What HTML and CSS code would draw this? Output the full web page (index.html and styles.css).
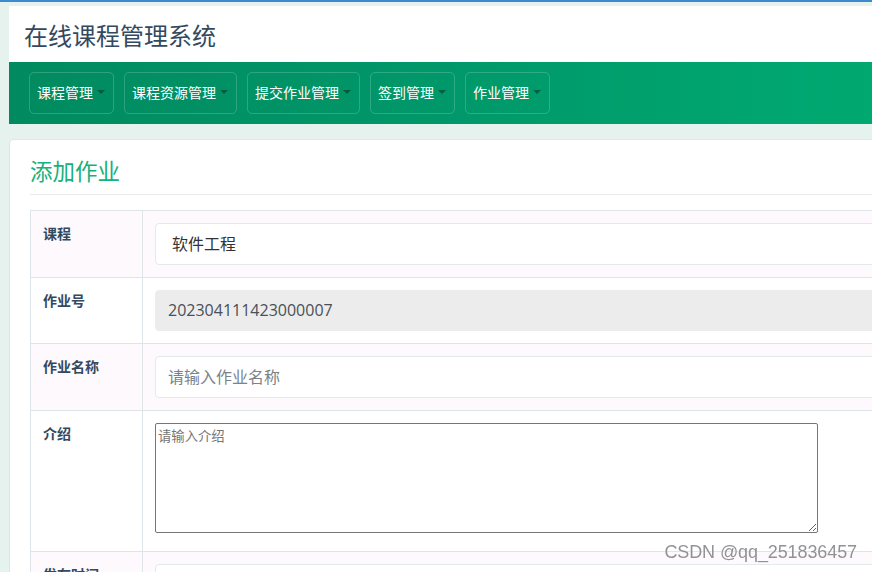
FILE: index.html
```html
<!DOCTYPE html>
<html lang="zh-CN">
<head>
<meta charset="utf-8">
<title>在线课程管理系统</title>
<link rel="stylesheet" href="styles.css">
</head>
<body>
<div class="page">
  <header class="site-header">在线课程管理系统</header>
  <nav class="navbar">
    <a class="nav-btn">课程管理<span class="caret"></span></a>
    <a class="nav-btn">课程资源管理<span class="caret"></span></a>
    <a class="nav-btn">提交作业管理<span class="caret"></span></a>
    <a class="nav-btn">签到管理<span class="caret"></span></a>
    <a class="nav-btn">作业管理<span class="caret"></span></a>
  </nav>
  <main class="card">
    <h2 class="card-title">添加作业</h2>
    <table class="form-table">
      <tr class="odd">
        <th>课程</th>
        <td><select class="form-control select"><option>软件工程</option></select></td>
      </tr>
      <tr>
        <th>作业号</th>
        <td><input class="form-control" type="text" value="202304111423000007" disabled></td>
      </tr>
      <tr class="odd">
        <th>作业名称</th>
        <td><input class="form-control" type="text" placeholder="请输入作业名称"></td>
      </tr>
      <tr>
        <th>介绍</th>
        <td><textarea class="intro" placeholder="请输入介绍"></textarea></td>
      </tr>
      <tr class="odd">
        <th>发布时间</th>
        <td><input class="form-control" type="text"></td>
      </tr>
    </table>
  </main>
</div>
<div class="watermark">CSDN @qq_251836457</div>
</body>
</html>
```

FILE: styles.css
```css
html, body {
  margin: 0;
  padding: 0;
}
body {
  background: #e6f2ee;
  border-top: 2px solid #3c8bcc;
  overflow: hidden;
  font-family: "Open Sans", "Noto Sans CJK SC", sans-serif;
  color: #34495e;
}
.page {
  width: 1100px;
  padding: 4px 0 0 9px;
}
.site-header {
  height: 56px;
  background: #fff;
  display: flex;
  align-items: center;
  padding-left: 15px;
  font-size: 24px;
  color: #34495e;
}
.navbar {
  height: 62px;
  box-sizing: border-box;
  padding: 10px 20px;
  display: flex;
  align-items: center;
  gap: 10px;
  background: linear-gradient(90deg, #018a5f 0%, #00986a 40%, #00a870 75%, #00ac72 100%);
}
.nav-btn {
  height: 42px;
  box-sizing: border-box;
  display: flex;
  align-items: center;
  padding: 0 8px 3px 7px;
  border: 1px solid rgba(255, 255, 255, 0.18);
  border-radius: 5px;
  color: #fff;
  font-size: 14px;
  white-space: nowrap;
}
.caret {
  width: 0;
  height: 0;
  margin-left: 4px;
  margin-top: 0;
  border-left: 4px solid transparent;
  border-right: 4px solid transparent;
  border-top: 4px solid rgba(0, 50, 30, 0.55);
}
.card {
  display: block;
  margin-top: 15px;
  background: #fff;
  border: 1px solid #dfe7e4;
  border-radius: 4px;
  padding: 0 20px 20px;
}
.card-title {
  margin: 0;
  padding: 17px 0 7px;
  font-size: 22.5px;
  line-height: 30px;
  font-weight: 400;
  color: #18b07c;
  border-bottom: 1px solid #e8eceb;
}
.form-table {
  margin-top: 15px;
  width: 100%;
  border-collapse: collapse;
}
.form-table th,
.form-table td {
  border: 1px solid #dfe4e8;
  padding: 12px;
  vertical-align: top;
  text-align: left;
}
.form-table th {
  width: 87px;
  font-size: 14px;
  line-height: 21px;
  font-weight: 700;
  color: #34495e;
}
.form-table tr.odd th,
.form-table tr.odd td {
  background: #fdf9fd;
}
.form-control {
  display: block;
  width: 100%;
  height: 41.5px;
  box-sizing: border-box;
  border: 1px solid #e4eaec;
  border-radius: 4px;
  background: #fff;
  padding: 0 12px;
  font-family: "Open Sans", "Noto Sans CJK SC", sans-serif;
  font-size: 16px;
  color: #495057;
  outline: none;
}
.form-control::placeholder {
  color: #7b8288;
}
.form-control:disabled {
  background: #ececec;
  border-color: #ececec;
  color: #495057;
}
.select {
  appearance: none;
  -webkit-appearance: none;
  padding-left: 16px;
  color: #333;
}
.intro {
  display: block;
  width: 663px;
  height: 110px;
  box-sizing: border-box;
  margin-bottom: 6px;
  border: 1px solid #767676;
  border-radius: 2px;
  padding: 2px;
  font-family: "Noto Sans CJK SC", sans-serif;
  font-size: 13.33px;
}
.intro::placeholder {
  color: #757575;
}
.watermark {
  position: fixed;
  right: 15px;
  bottom: 9px;
  font-family: "Liberation Sans", sans-serif;
  font-size: 18px;
  color: rgba(110, 110, 110, 0.75);
  text-shadow: 0 0 2px #fff;
  letter-spacing: -0.1px;
}
```
